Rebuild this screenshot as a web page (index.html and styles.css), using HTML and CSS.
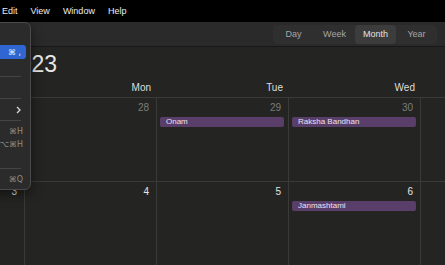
FILE: index.html
```html
<!DOCTYPE html>
<html lang="en">

<head>
  <meta charset="UTF-8">
  <meta name="viewport" content="width=device-width, initial-scale=1.0">
  <title>Calendar</title>
  <link rel="stylesheet" href="styles.css">
</head>

<body>
  <div class="menubar">
    <span>Edit</span>
    <span>View</span>
    <span>Window</span>
    <span>Help</span>
  </div>

  <div class="window">
    <div class="toolbar">
      <div class="segmented">
        <span class="seg">Day</span>
        <span class="seg">Week</span>
        <span class="seg active">Month</span>
        <span class="seg">Year</span>
      </div>
    </div>

    <div class="title-row">
      <h1 class="title">2023</h1>
    </div>

    <div class="weekdays">
      <div class="weekday">Sun</div>
      <div class="weekday">Mon</div>
      <div class="weekday">Tue</div>
      <div class="weekday">Wed</div>
      <div class="weekday"></div>
    </div>

    <div class="week first">
      <div class="day other"><div class="num">27</div></div>
      <div class="day other"><div class="num">28</div></div>
      <div class="day other">
        <div class="num">29</div>
        <div class="event">Onam</div>
      </div>
      <div class="day other">
        <div class="num">30</div>
        <div class="event">Raksha Bandhan</div>
      </div>
      <div class="day other"></div>
    </div>

    <div class="week">
      <div class="day"><div class="num">3</div></div>
      <div class="day"><div class="num">4</div></div>
      <div class="day"><div class="num">5</div></div>
      <div class="day">
        <div class="num">6</div>
        <div class="event">Janmashtami</div>
      </div>
      <div class="day"></div>
    </div>
  </div>

  <!-- app menu, dropped open from the (off-screen) Calendar item -->
  <div class="app-menu">
    <div class="item">About Calendar</div>
    <div class="item selected">Settings… <span class="key">⌘ ,</span></div>
    <div class="item">Accounts…</div>
    <div class="sep"></div>
    <div class="item">Privacy Report</div>
    <div class="sep"></div>
    <div class="item">Services
      <svg class="chev" width="5" height="8" viewBox="0 0 5 8">
        <polyline points="1,1 4,4 1,7" fill="none" stroke="#d8d8d8" stroke-width="1.3" />
      </svg>
    </div>
    <div class="sep"></div>
    <div class="item">Hide Calendar <span class="key">⌘H</span></div>
    <div class="item">Hide Others <span class="key">⌥⌘H</span></div>
    <div class="item">Show All</div>
    <div class="sep"></div>
    <div class="item">Quit Calendar <span class="key">⌘Q</span></div>
  </div>
</body>

</html>
```

FILE: styles.css
```css
:root {
  --cell-bg: #242422;
  --line: #3a3a38;
  --text: #e4e4e4;
  --muted: #7c7c7a;
  --event-bg: #5a3e6a;
  --select: #2f66d2;
}

body {
  margin: 0;
  width: 445px;
  height: 265px;
  overflow: hidden;
  background: var(--cell-bg);
  color: var(--text);
  font-family: 'Liberation Sans', Arial, sans-serif;
  position: relative;
}

.menubar {
  height: 22px;
  background: #000;
  display: flex;
  align-items: center;
  gap: 13px;
  padding-left: 2px;
  font-size: 9px;
  color: #ededed;
}

.window {
  overflow: hidden;
}

.toolbar {
  height: 24px;
  background: #2a2a2a;
  border-bottom: 1px solid #181818;
  display: flex;
  justify-content: flex-end;
  align-items: center;
  padding-right: 8px;
}

.segmented {
  display: flex;
  background: #2f2f2f;
  border-radius: 5px;
  height: 19px;
}

.seg {
  width: 41px;
  display: flex;
  align-items: center;
  justify-content: center;
  font-size: 9px;
  color: #a6a6a6;
  border-radius: 4px;
}

.seg.active {
  background: #3c3c3c;
  color: #e2e2e2;
}

.title-row {
  height: 28px;
  padding: 2px 0 0 6px;
}

.title {
  margin: 0;
  font-size: 23px;
  font-weight: normal;
  line-height: 30px;
  color: #e6e6e6;
}

.weekdays,
.week {
  display: grid;
  grid-template-columns: 24px 132px 132px 132px 132px;
  width: 552px;
}

.weekdays {
  height: 20px;
  border-bottom: 1px solid var(--line);
}

.weekday {
  text-align: right;
  padding-right: 5px;
  font-size: 10px;
  line-height: 12px;
  padding-top: 5px;
  color: #dedede;
  overflow: hidden;
}

.week {
  height: 83px;
  border-bottom: 1px solid var(--line);
}

.day {
  border-left: 1px solid var(--line);
  overflow: hidden;
}

.day:first-child {
  border-left: none;
}

.num {
  text-align: right;
  padding: 4px 7px 0 0;
  font-size: 10px;
  line-height: 12px;
  color: var(--text);
}

.day.other .num {
  color: var(--muted);
}

.event {
  margin: 3px 4px 0 3px;
  height: 10px;
  line-height: 10px;
  padding-left: 6px;
  border-radius: 2px;
  background: var(--event-bg);
  color: #ece2f2;
  font-size: 8px;
  white-space: nowrap;
}

.app-menu {
  position: absolute;
  top: 22px;
  left: -169px;
  width: 198px;
  padding: 9px 0 3px;
  background: #2b2b2b;
  border: 1px solid #4a4a4a;
  border-radius: 6px;
  box-shadow: 0 4px 12px rgba(0, 0, 0, 0.5);
  font-size: 9px;
  color: #dcdcdc;
  white-space: nowrap;
}

.item {
  height: 13px;
  margin: 0 4px;
  padding: 0 3px 0 8px;
  border-radius: 3px;
  display: flex;
  align-items: center;
  justify-content: space-between;
}

.item.selected {
  height: 14px;
  background: var(--select);
  color: #fff;
}

.key {
  font-family: 'DejaVu Sans', sans-serif;
  font-size: 8px;
  color: #8c8c8c;
}

.item.selected .key {
  margin-right: 2px;
  color: #f2f6ff;
}

.chev {
  margin-right: 2px;
}

.sep {
  height: 1px;
  margin: 4px 9px;
  background: #444;
}
```
